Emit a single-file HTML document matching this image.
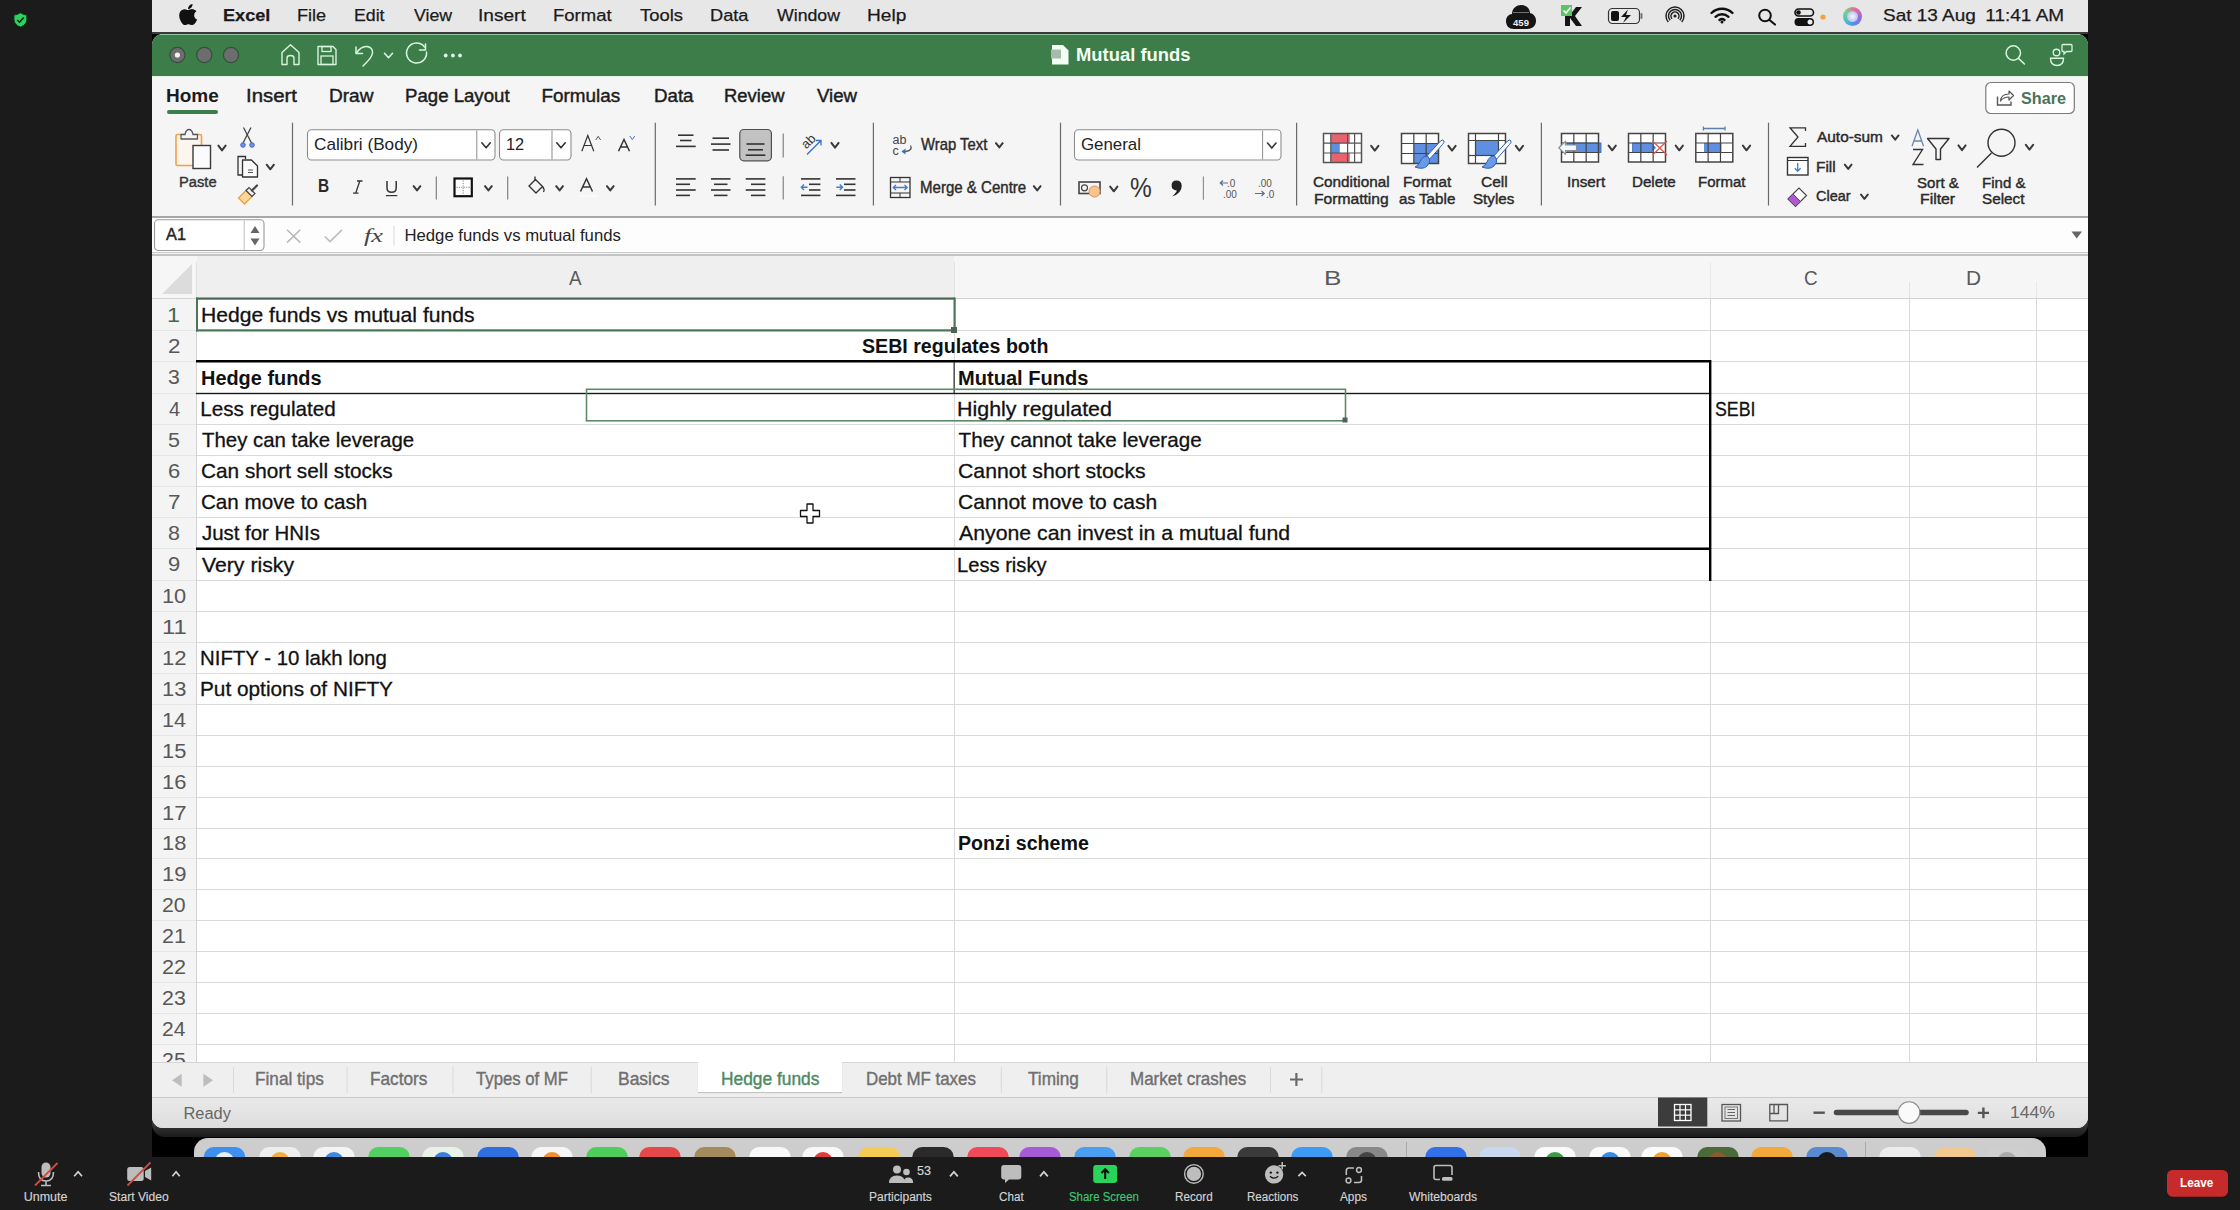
<!DOCTYPE html><html><head><meta charset="utf-8"><style>
*{margin:0;padding:0;box-sizing:border-box}
html,body{width:2240px;height:1210px;overflow:hidden;background:#1b1b1b}
body{position:relative;font-family:"Liberation Sans",sans-serif}
.r{position:absolute}
.t{position:absolute;white-space:nowrap;transform-origin:0 0}
#ov{position:absolute;left:0;top:0}
</style></head><body><div class="r" style="left:0px;top:0px;width:2240px;height:1210px;background:#1b1b1b;"></div>
<div class="r" style="left:152px;top:0px;width:1936px;height:1157px;background:#000;"></div>
<div class="r" style="left:152px;top:0px;width:1936px;height:32px;background:#e7e7e7;"></div>
<div class="r" style="left:152px;top:32px;width:1936px;height:2px;background:#3a3a3a;"></div>
<div class="r" style="left:152px;top:1110px;width:1936px;height:27px;background:linear-gradient(#444,#333 60%,#1a1a1a);border-radius:0 0 13px 13px;"></div>
<div class="r" style="left:152px;top:34px;width:1936px;height:1094px;background:#f5f5f5;border-radius:11px;"></div>
<div class="r" style="left:152px;top:34px;width:1936px;height:42px;background:#3c7d4a;border-radius:11px 11px 0 0;"></div>
<div class="r" style="left:160px;top:34px;width:1920px;height:1px;background:#8fc39b;"></div>
<div class="r" style="left:152px;top:76px;width:1936px;height:1px;background:#e2f2e4;"></div>
<div class="r" style="left:167px;top:110px;width:51px;height:4px;background:#3c7d4a;border-radius:2px;"></div>
<div class="r" style="left:1842.7px;top:6.9px;width:19.2px;height:19.2px;background:conic-gradient(from 20deg,#e86a9a,#9a6ad8,#5a8ae8,#4ac0c8,#7ad08a,#e86a9a);border-radius:50%;"></div>
<div class="r" style="left:1846.5px;top:10.7px;width:11.6px;height:11.6px;background:radial-gradient(#f4f6ff,#b8c4f0 70%,#8a9ad8);border-radius:50%;"></div>
<div class="r" style="left:152px;top:216px;width:1936px;height:2px;background:#a8a8a8;"></div>
<div class="r" style="left:152px;top:218px;width:1936px;height:35px;background:#fdfdfd;"></div>
<div class="r" style="left:152px;top:252px;width:1936px;height:1px;background:#c9c9c9;"></div>
<div class="r" style="left:152px;top:253px;width:1936px;height:1px;background:#f5f5f5;"></div>
<div class="r" style="left:152px;top:254px;width:1936px;height:2px;background:#c4c4c4;"></div>
<div class="r" style="left:152px;top:256px;width:1936px;height:806px;background:#ffffff;"></div>
<div class="r" style="left:152px;top:256px;width:1936px;height:43px;background:#f6f6f6;"></div>
<div class="r" style="left:197px;top:256px;width:757px;height:43px;background:#efefef;"></div>
<div class="r" style="left:152px;top:299px;width:45px;height:763px;background:#f4f4f4;"></div>
<div class="r" style="left:152px;top:1062px;width:1936px;height:35px;background:#efefef;"></div>
<div class="r" style="left:152px;top:1062px;width:1936px;height:1px;background:#d6d6d6;"></div>
<div class="r" style="left:152px;top:1097px;width:1936px;height:31px;background:linear-gradient(#e9e9e9,#dedede);border-radius:0 0 11px 11px;"></div>
<div class="r" style="left:152px;top:1096.5px;width:1936px;height:1px;background:#c9c9c9;"></div>
<div class="r" style="left:697.6px;top:1062px;width:144.6px;height:30px;background:#ffffff;box-shadow:0 1px 1px rgba(0,0,0,0.18);"></div>
<div class="r" style="left:194px;top:1138px;width:1852px;height:30px;background:#cdcdcd;border-radius:14px 14px 0 0;"></div>
<div class="r" style="left:0px;top:1157px;width:2240px;height:53px;background:#1b1b1b;"></div>
<svg id="ov" width="2240" height="1210" viewBox="0 0 2240 1210"><path transform="translate(170.9,-0.4) scale(0.0295 0.0282)" fill="#111" d="M788 553c-1-94 77-139 80-141-44-64-112-73-136-74-58-6-113 34-142 34-30 0-75-33-123-32-63 1-122 37-154 93-66 115-17 284 47 377 31 45 68 96 117 94 47-2 65-30 122-30s73 30 123 29c51-1 83-46 114-91 36-52 51-103 52-106-1 0-99-38-100-153zM694 277c26-32 44-76 39-120-38 2-84 26-111 57-24 28-45 73-40 116 43 3 86-21 112-53z"/>
<path d="M1512 14 C1512 8 1517 5 1521 5 C1526 5 1530 8 1530 13 C1534 14 1536 17 1536 21 C1536 26 1532 29 1527 29 L1514 29 C1509 29 1506 26 1506 21 C1506 17 1509 14 1512 14 Z" fill="#151515"/>
<text x="1521" y="26" font-family="Liberation Sans" font-size="9.5" font-weight="700" fill="#eee" text-anchor="middle">459</text>
<line x1="1513" y1="12.5" x2="1529" y2="12.5" stroke="#888" stroke-width="0.8"/>
<path d="M1565 7 h5 v8 l6-8 h6 l-7 9 l7 10 h-6 l-6-8 v8 h-5 z" fill="#151515"/>
<rect x="1561" y="5" width="11" height="11" fill="#5bc466"/>
<polyline points="1563.5,10.5 1566,13 1570.5,7.5" fill="none" stroke="#fff" stroke-width="1.6"/>
<rect x="1608.5" y="8.5" width="31" height="15" rx="4" fill="none" stroke="#333" stroke-width="1.2"/>
<rect x="1640.5" y="13" width="2" height="6" rx="1" fill="#777"/>
<rect x="1611" y="11" width="8" height="10" rx="2" fill="#111"/>
<path d="M1628 9.5 L1621 17 L1626 17 L1623 23 L1631 15 L1626 15 Z" fill="#111"/>
<path d="M1668.25 21.94 A9 9 0 1 1 1681.75 21.94" fill="none" stroke="#222" stroke-width="1.5"/>
<path d="M1670.125 20.29 A6.5 6.5 0 1 1 1679.875 20.29" fill="none" stroke="#222" stroke-width="1.5"/>
<path d="M1672.0 18.64 A4 4 0 1 1 1678.0 18.64" fill="none" stroke="#222" stroke-width="1.5"/>
<circle cx="1675" cy="16" r="1.6" fill="#222"/>
<path d="M1711.5 13 A15 15 0 0 1 1732.5 13" fill="none" stroke="#111" stroke-width="2.4" stroke-linecap="round"/>
<path d="M1715.5 16.8 A9.5 9.5 0 0 1 1728.5 16.8" fill="none" stroke="#111" stroke-width="2.4" stroke-linecap="round"/>
<path d="M1719.5 20 A4 4 0 0 1 1724.5 20" fill="none" stroke="#111" stroke-width="2.4" stroke-linecap="round"/>
<circle cx="1722" cy="22" r="1.5" fill="#111"/>
<circle cx="1765" cy="15.5" r="5.8" fill="none" stroke="#111" stroke-width="2"/>
<line x1="1769.5" y1="20" x2="1775" y2="24.5" stroke="#111" stroke-width="2.2" stroke-linecap="round"/>
<rect x="1795" y="9" width="18.5" height="7" rx="3.5" fill="none" stroke="#111" stroke-width="1.6"/>
<circle cx="1798.5" cy="12.5" r="2.3" fill="#111"/>
<rect x="1794.5" y="18" width="19.5" height="8" rx="4" fill="#111"/>
<circle cx="1810" cy="22" r="2.5" fill="#eee"/>
<circle cx="1823" cy="17" r="2.6" fill="#f2a23a"/>
<defs><radialGradient id="siri" cx="40%" cy="40%" r="60%"><stop offset="0" stop-color="#b9c8ff"/><stop offset="0.45" stop-color="#5a7fd6"/><stop offset="0.75" stop-color="#9b5fb8"/><stop offset="1" stop-color="#4aa0a8"/></radialGradient></defs>
<circle cx="177.4" cy="55" r="7.6" fill="#6d6d6d" stroke="#33503a" stroke-width="1.2"/>
<circle cx="204.3" cy="55" r="7.6" fill="#6d6d6d" stroke="#33503a" stroke-width="1.2"/>
<circle cx="231" cy="55" r="7.6" fill="#6d6d6d" stroke="#33503a" stroke-width="1.2"/>
<circle cx="177.4" cy="55" r="2.6" fill="#f2f2f2"/>
<path d="M282 64.5 V52.5 L290.5 44.8 L299 52.5 V64.5 H294 V58 Q294 55.5 290.5 55.5 Q287 55.5 287 58 V64.5 Z" fill="none" stroke="#d9f5de" stroke-width="1.4" stroke-linejoin="round"/>
<path d="M318 46.5 H333 L336 49.5 V64.5 H318 Z" fill="none" stroke="#d9f5de" stroke-width="1.4" stroke-linejoin="round"/>
<rect x="322" y="46.5" width="9" height="5" fill="none" stroke="#d9f5de" stroke-width="1.3"/>
<rect x="321" y="56" width="12" height="8.5" fill="none" stroke="#d9f5de" stroke-width="1.3"/>
<path d="M356 47 V53.5 H362.5" fill="none" stroke="#d9f5de" stroke-width="1.5" stroke-linecap="round" stroke-linejoin="round"/>
<path d="M356.5 53 Q361 46 367 46.5 Q373 47.5 372.5 53 Q372 57 366 63 L363 66" fill="none" stroke="#d9f5de" stroke-width="1.5" stroke-linecap="round"/>
<polyline points="384.5,53.25 388.5,57.75 392.5,53.25" fill="none" stroke="#d9f5de" stroke-width="1.6" stroke-linecap="round" stroke-linejoin="round"/>
<path d="M424.5 47 A10 10 0 1 0 426.5 52" fill="none" stroke="#d9f5de" stroke-width="1.5" stroke-linecap="round"/>
<polyline points="425.5,44 425.5,50 419.5,50" fill="none" stroke="#d9f5de" stroke-width="1.5" stroke-linecap="round" stroke-linejoin="round"/>
<circle cx="445.7" cy="55.5" r="1.9" fill="#d9f5de"/>
<circle cx="452.9" cy="55.5" r="1.9" fill="#d9f5de"/>
<circle cx="460" cy="55.5" r="1.9" fill="#d9f5de"/>
<path d="M1052 45 H1063 L1068.5 50.5 V64.5 H1052 Z" fill="#f2fff2"/>
<rect x="1051" y="49.5" width="10" height="9" fill="#a9b9ab"/>
<circle cx="2013.3" cy="53" r="7.2" fill="none" stroke="#d9f5de" stroke-width="1.5"/>
<line x1="2018.5" y1="58.3" x2="2024.4" y2="64" stroke="#d9f5de" stroke-width="1.6" stroke-linecap="round"/>
<circle cx="2056.5" cy="52.5" r="3.3" fill="none" stroke="#d9f5de" stroke-width="1.4"/>
<path d="M2050.5 58.3 H2063.5 Q2063.5 65.5 2057 65.5 Q2050.5 65.5 2050.5 58.3 Z" fill="none" stroke="#d9f5de" stroke-width="1.4"/>
<path d="M2063 44.5 H2071 Q2072 44.5 2072 45.5 V50.5 Q2072 51.5 2071 51.5 H2066.5 L2064 54 V51.5 H2063 Q2062 51.5 2062 50.5 V45.5 Q2062 44.5 2063 44.5 Z" fill="none" stroke="#d9f5de" stroke-width="1.3"/>
<rect x="1985.8" y="82.5" width="88.5" height="31" rx="5" fill="#fff" stroke="#7a7a7a" stroke-width="1.2"/>
<path d="M1997.5 96.5 V105 H2011 V101.5" fill="none" stroke="#555" stroke-width="1.4"/>
<path d="M2000.5 101 Q2001 94 2009 94 V91 L2013.5 95.5 L2009 100 V97 Q2003.5 97 2000.5 101 Z" fill="none" stroke="#555" stroke-width="1.2" stroke-linejoin="round"/>
<line x1="292.5" y1="122.7" x2="292.5" y2="205.5" stroke="#6a6a6a" stroke-width="1.2"/>
<line x1="655.3" y1="122.7" x2="655.3" y2="205.5" stroke="#6a6a6a" stroke-width="1.2"/>
<line x1="873.4" y1="122.7" x2="873.4" y2="205.5" stroke="#6a6a6a" stroke-width="1.2"/>
<line x1="1060.5" y1="122.7" x2="1060.5" y2="205.5" stroke="#6a6a6a" stroke-width="1.2"/>
<line x1="1296.6" y1="122.7" x2="1296.6" y2="205.5" stroke="#6a6a6a" stroke-width="1.2"/>
<line x1="1541.4" y1="122.7" x2="1541.4" y2="205.5" stroke="#6a6a6a" stroke-width="1.2"/>
<line x1="1768.5" y1="122.7" x2="1768.5" y2="205.5" stroke="#6a6a6a" stroke-width="1.2"/>
<line x1="436.3" y1="176.5" x2="436.3" y2="199.5" stroke="#777" stroke-width="1.1"/>
<line x1="507.7" y1="176.5" x2="507.7" y2="199.5" stroke="#777" stroke-width="1.1"/>
<line x1="783.2" y1="133.4" x2="783.2" y2="157.5" stroke="#777" stroke-width="1.1"/>
<line x1="783.2" y1="176.3" x2="783.2" y2="199.5" stroke="#777" stroke-width="1.1"/>
<line x1="1203.4" y1="176.4" x2="1203.4" y2="199.8" stroke="#888" stroke-width="1.1"/>
<rect x="176" y="134.5" width="25.5" height="31" rx="1.5" fill="#fdf6ee" stroke="#f0a048" stroke-width="1.6"/>
<path d="M181 139 V134.5 H185 Q186 129.5 189 129.5 Q192 129.5 193 134.5 H197.5 V139 Z" fill="#f5f5f5" stroke="#5a5a5a" stroke-width="1.3" stroke-linejoin="round"/>
<rect x="193" y="145.5" width="17.5" height="23" fill="#fbfbfd" stroke="#3a3a3a" stroke-width="1.4"/>
<polyline points="218.4,145.625 222,150.375 225.6,145.625" fill="none" stroke="#3a3a3a" stroke-width="2.0" stroke-linecap="round" stroke-linejoin="round"/>
<line x1="243.5" y1="127.5" x2="251.5" y2="143" stroke="#444" stroke-width="1.3"/>
<line x1="251" y1="127.5" x2="243" y2="143" stroke="#444" stroke-width="1.3"/>
<circle cx="243" cy="145" r="2.3" fill="#6f8fe0" stroke="#4a6ac8" stroke-width="1"/>
<circle cx="252" cy="145" r="2.3" fill="#6f8fe0" stroke="#4a6ac8" stroke-width="1"/>
<path d="M245.5 159 L245.5 156.5 H238 V175 H242" fill="none" stroke="#333" stroke-width="1.3"/>
<path d="M242.5 160 H251.5 L257.5 166 V177 H242.5 Z" fill="#fbfbfb" stroke="#333" stroke-width="1.3" stroke-linejoin="round"/>
<line x1="248" y1="170" x2="253" y2="170" stroke="#555" stroke-width="1"/><line x1="248" y1="172.5" x2="253" y2="172.5" stroke="#555" stroke-width="1"/>
<polyline points="266.7,164.72 270.3,169.28 273.90000000000003,164.72" fill="none" stroke="#3a3a3a" stroke-width="2.0" stroke-linecap="round" stroke-linejoin="round"/>
<path d="M238.5 198 L246 190.5 L252 196.5 L244.5 204 Z" fill="#f7d9a0" stroke="#f0a048" stroke-width="1.3"/>
<path d="M246 190.5 L249 187.5 L255 193.5 L252 196.5 Z" fill="#eee" stroke="#444" stroke-width="1.2"/>
<line x1="252" y1="190.5" x2="257" y2="185.5" stroke="#444" stroke-width="2.2" stroke-linecap="round"/>
<rect x="307.5" y="129.8" width="187.5" height="30.2" rx="4" fill="#fff" stroke="#8d8d8d" stroke-width="1.1"/>
<line x1="476.8" y1="130.5" x2="476.8" y2="159.5" stroke="#8d8d8d" stroke-width="1"/>
<polyline points="481.85,142.8 486.1,147.8 490.35,142.8" fill="none" stroke="#333" stroke-width="1.6" stroke-linecap="round" stroke-linejoin="round"/>
<rect x="499.5" y="129.8" width="71.5" height="30.2" rx="4" fill="#fff" stroke="#8d8d8d" stroke-width="1.1"/>
<line x1="552" y1="130.5" x2="552" y2="159.5" stroke="#8d8d8d" stroke-width="1"/>
<polyline points="556.75,142.8 561,147.8 565.25,142.8" fill="none" stroke="#333" stroke-width="1.6" stroke-linecap="round" stroke-linejoin="round"/>
<path d="M581.8 151.3 L587.8 135.5 L593.8 151.3 M584 145.5 H591.5" fill="none" stroke="#333" stroke-width="1.2"/>
<polyline points="595.8,140 598.2,136.3 600.6,140" fill="none" stroke="#555" stroke-width="1"/>
<path d="M618.5 151.3 L624 139.5 L629.5 151.3 M620.5 147 H627.5" fill="none" stroke="#333" stroke-width="1.5"/>
<polyline points="629.8,136 632.3,139.6 634.8,136" fill="none" stroke="#4a78c8" stroke-width="1"/>
<path d="M357 181 H362.5 M353 193.2 H358.5 M359.8 181 L355.7 193.2" fill="none" stroke="#333" stroke-width="1.3"/>
<path d="M387 181 V188 Q387 192.3 391.6 192.3 Q396.2 192.3 396.2 188 V181" fill="none" stroke="#333" stroke-width="1.5"/>
<line x1="386" y1="195.6" x2="397.3" y2="195.6" stroke="#333" stroke-width="1.2"/>
<polyline points="413.625,186.16250000000002 417,190.4375 420.375,186.16250000000002" fill="none" stroke="#3a3a3a" stroke-width="2.0" stroke-linecap="round" stroke-linejoin="round"/>
<rect x="454.5" y="178.5" width="17.3" height="17.7" fill="#fff" stroke="#111" stroke-width="2.2"/>
<line x1="463.2" y1="180.5" x2="463.2" y2="194.5" stroke="#777" stroke-width="0.9" stroke-dasharray="1.2 1.2"/>
<line x1="456.5" y1="187.3" x2="470" y2="187.3" stroke="#777" stroke-width="0.9" stroke-dasharray="1.2 1.2"/>
<polyline points="485.025,186.16250000000002 488.4,190.4375 491.775,186.16250000000002" fill="none" stroke="#3a3a3a" stroke-width="2.0" stroke-linecap="round" stroke-linejoin="round"/>
<path d="M529 186 L535.5 179.5 L542.5 186.5 L536 193 Z" fill="none" stroke="#333" stroke-width="1.4" stroke-linejoin="round"/>
<path d="M535 181 V176.5" fill="none" stroke="#333" stroke-width="1.3"/>
<path d="M542.5 186.5 Q545 189.5 543.5 192" fill="none" stroke="#333" stroke-width="1.3"/>
<polyline points="556.225,186.16250000000002 559.6,190.4375 562.975,186.16250000000002" fill="none" stroke="#3a3a3a" stroke-width="2.0" stroke-linecap="round" stroke-linejoin="round"/>
<path d="M580.5 191.5 L586.5 178.7 L592.5 191.5 M582.8 187 H590.2" fill="none" stroke="#333" stroke-width="1.5"/>
<rect x="579.5" y="194.5" width="18" height="2.5" rx="1" fill="#fafafa"/>
<polyline points="606.925,186.16250000000002 610.3,190.4375 613.675,186.16250000000002" fill="none" stroke="#3a3a3a" stroke-width="2.0" stroke-linecap="round" stroke-linejoin="round"/>
<line x1="678" y1="135.2" x2="693.5" y2="135.2" stroke="#333" stroke-width="1.6"/>
<line x1="680" y1="140.5" x2="691.5" y2="140.5" stroke="#333" stroke-width="1.6"/>
<line x1="676" y1="146.4" x2="695.7" y2="146.4" stroke="#333" stroke-width="1.6"/>
<line x1="712.5" y1="138.2" x2="729" y2="138.2" stroke="#333" stroke-width="1.6"/>
<line x1="711" y1="144.1" x2="730.5" y2="144.1" stroke="#333" stroke-width="1.6"/>
<line x1="712.5" y1="150" x2="729" y2="150" stroke="#333" stroke-width="1.6"/>
<rect x="739.8" y="129.5" width="31.6" height="31.3" rx="4" fill="#c2c2c2" stroke="#505050" stroke-width="1.2"/>
<line x1="746.5" y1="144" x2="764.5" y2="144" stroke="#333" stroke-width="1.6"/>
<line x1="748" y1="149.8" x2="763" y2="149.8" stroke="#333" stroke-width="1.6"/>
<line x1="745.7" y1="155.2" x2="765.4" y2="155.2" stroke="#333" stroke-width="1.6"/>
<line x1="676" y1="178.9" x2="695.7" y2="178.9" stroke="#333" stroke-width="1.6"/>
<line x1="676" y1="184.3" x2="690" y2="184.3" stroke="#333" stroke-width="1.6"/>
<line x1="676" y1="190" x2="695.7" y2="190" stroke="#333" stroke-width="1.6"/>
<line x1="676" y1="195.4" x2="690" y2="195.4" stroke="#333" stroke-width="1.6"/>
<line x1="711" y1="178.9" x2="730.5" y2="178.9" stroke="#333" stroke-width="1.6"/>
<line x1="714" y1="184.3" x2="727.5" y2="184.3" stroke="#333" stroke-width="1.6"/>
<line x1="711" y1="190" x2="730.5" y2="190" stroke="#333" stroke-width="1.6"/>
<line x1="714" y1="195.4" x2="727.5" y2="195.4" stroke="#333" stroke-width="1.6"/>
<line x1="745.7" y1="178.9" x2="765.4" y2="178.9" stroke="#333" stroke-width="1.6"/>
<line x1="751" y1="184.3" x2="765.4" y2="184.3" stroke="#333" stroke-width="1.6"/>
<line x1="745.7" y1="190" x2="765.4" y2="190" stroke="#333" stroke-width="1.6"/>
<line x1="751" y1="195.4" x2="765.4" y2="195.4" stroke="#333" stroke-width="1.6"/>
<line x1="801" y1="178.9" x2="820.4" y2="178.9" stroke="#333" stroke-width="1.6"/>
<line x1="801" y1="195.4" x2="820.4" y2="195.4" stroke="#333" stroke-width="1.6"/>
<line x1="809" y1="184.3" x2="820.4" y2="184.3" stroke="#333" stroke-width="1.6"/>
<line x1="809" y1="190" x2="820.4" y2="190" stroke="#333" stroke-width="1.6"/>
<path d="M807.5 187.2 H801.5 M804 184.5 L801.3 187.2 L804 189.9" fill="none" stroke="#3d7fd0" stroke-width="1.4"/>
<line x1="836" y1="178.9" x2="855.5" y2="178.9" stroke="#333" stroke-width="1.6"/>
<line x1="836" y1="195.4" x2="855.5" y2="195.4" stroke="#333" stroke-width="1.6"/>
<line x1="844" y1="184.3" x2="855.5" y2="184.3" stroke="#333" stroke-width="1.6"/>
<line x1="844" y1="190" x2="855.5" y2="190" stroke="#333" stroke-width="1.6"/>
<path d="M836.3 187.2 H842.3 M839.8 184.5 L842.5 187.2 L839.8 189.9" fill="none" stroke="#3d7fd0" stroke-width="1.4"/>
<text x="808" y="145.8" font-family="Liberation Sans" font-size="13" fill="#3a3a3a" text-anchor="middle" transform="rotate(-45 808 141)">ab</text>
<path d="M807 154.5 L820.5 141 M816 140.5 H821 V145.5" fill="none" stroke="#3573c0" stroke-width="1.3"/>
<polyline points="831.4,142.925 835,147.675 838.6,142.925" fill="none" stroke="#3a3a3a" stroke-width="2.0" stroke-linecap="round" stroke-linejoin="round"/>
<text x="892.5" y="144" font-family="Liberation Sans" font-size="12.5" fill="#444">ab</text>
<text x="892.5" y="155" font-family="Liberation Sans" font-size="12.5" fill="#444">c</text>
<path d="M910.5 145.5 Q913 150 906 151.5 H902.5" fill="none" stroke="#555" stroke-width="1.3"/>
<path d="M901.5 151.5 L905.5 148.5 V154.5 Z" fill="#3573c0"/>
<polyline points="995.925,143.16250000000002 999.3,147.4375 1002.675,143.16250000000002" fill="none" stroke="#3a3a3a" stroke-width="2.0" stroke-linecap="round" stroke-linejoin="round"/>
<rect x="890.5" y="177.5" width="19.5" height="20" fill="none" stroke="#333" stroke-width="1.3"/>
<line x1="890.5" y1="182" x2="910" y2="182" stroke="#333" stroke-width="1"/><line x1="890.5" y1="193" x2="910" y2="193" stroke="#333" stroke-width="1"/>
<line x1="900" y1="177.5" x2="900" y2="182" stroke="#333" stroke-width="1"/><line x1="900" y1="193" x2="900" y2="197.5" stroke="#333" stroke-width="1"/>
<path d="M893.5 187.5 H907 M896 185 L893.3 187.5 L896 190 M904.5 185 L907.2 187.5 L904.5 190" fill="none" stroke="#3d7fd0" stroke-width="1.3"/>
<polyline points="1033.825,186.16250000000002 1037.2,190.4375 1040.575,186.16250000000002" fill="none" stroke="#3a3a3a" stroke-width="2.0" stroke-linecap="round" stroke-linejoin="round"/>
<rect x="1074.5" y="129.8" width="206.5" height="30.2" rx="4" fill="#fff" stroke="#8d8d8d" stroke-width="1.1"/>
<line x1="1262.6" y1="130.5" x2="1262.6" y2="159.5" stroke="#8d8d8d" stroke-width="1"/>
<polyline points="1267.55,143.1 1271.8,148.1 1276.05,143.1" fill="none" stroke="#333" stroke-width="1.6" stroke-linecap="round" stroke-linejoin="round"/>
<rect x="1079" y="182" width="21" height="11.5" fill="none" stroke="#444" stroke-width="1.6"/>
<circle cx="1084.5" cy="187.8" r="3" fill="none" stroke="#444" stroke-width="1.2"/>
<ellipse cx="1094.5" cy="191.5" rx="5.5" ry="5.5" fill="#f7c590" stroke="#e9904a" stroke-width="1"/>
<polyline points="1110.2,186.525 1113.8,191.275 1117.3999999999999,186.525" fill="none" stroke="#3a3a3a" stroke-width="2.0" stroke-linecap="round" stroke-linejoin="round"/>
<path d="M1176.5 180.5 Q1181.7 180.5 1181.7 186 Q1181.7 193.5 1172 196.5 Q1176.5 192.5 1176.8 190.5 Q1171.6 190 1171.6 185.5 Q1171.6 180.5 1176.5 180.5 Z" fill="#222"/>
<text x="1227" y="186.5" font-family="Liberation Sans" font-size="10" fill="#555">.0</text>
<text x="1223" y="197.5" font-family="Liberation Sans" font-size="10" fill="#555">.00</text>
<path d="M1228 183 H1220.5 M1223 180.5 L1220.3 183 L1223 185.5" fill="none" stroke="#5a6f8f" stroke-width="1.2"/>
<text x="1258" y="186.5" font-family="Liberation Sans" font-size="10" fill="#555">.00</text>
<text x="1266" y="197.5" font-family="Liberation Sans" font-size="10" fill="#555">.0</text>
<path d="M1255 193.5 H1264 M1261.5 191 L1264.2 193.5 L1261.5 196" fill="none" stroke="#5a6f8f" stroke-width="1.2"/>
<rect x="1323.5" y="133.5" width="38" height="29" fill="#fff"/>
<rect x="1330.8" y="133.5" width="19" height="9.6" fill="#e8636e"/>
<rect x="1330.8" y="153" width="19" height="9.6" fill="#e8636e"/>
<rect x="1330.8" y="143.1" width="9" height="9.9" fill="#5e8fe0"/>
<rect x="1323.5" y="133.5" width="38" height="29" fill="none" stroke="#555" stroke-width="1.5"/>
<line x1="1330.8" y1="133.5" x2="1330.8" y2="162.5" stroke="#555" stroke-width="1.2"/>
<line x1="1347.6" y1="133.5" x2="1347.6" y2="162.5" stroke="#555" stroke-width="1.2"/>
<line x1="1354.6" y1="133.5" x2="1354.6" y2="162.5" stroke="#555" stroke-width="1.2"/>
<line x1="1323.5" y1="143.1" x2="1361.5" y2="143.1" stroke="#555" stroke-width="1.2"/>
<line x1="1323.5" y1="153" x2="1361.5" y2="153" stroke="#555" stroke-width="1.2"/>
<polyline points="1371.2,145.825 1374.8,150.575 1378.3999999999999,145.825" fill="none" stroke="#3a3a3a" stroke-width="2.0" stroke-linecap="round" stroke-linejoin="round"/>
<rect x="1401.5" y="133.5" width="37" height="30" fill="#fff"/>
<rect x="1414" y="143.5" width="24.5" height="20" fill="#5e8fe0"/>
<rect x="1401.5" y="133.5" width="37.0" height="30.0" fill="none" stroke="#444" stroke-width="1.5"/>
<line x1="1413.83" y1="133.5" x2="1413.83" y2="163.5" stroke="#444" stroke-width="1.2000000000000002"/>
<line x1="1426.17" y1="133.5" x2="1426.17" y2="163.5" stroke="#444" stroke-width="1.2000000000000002"/>
<line x1="1401.5" y1="143.50" x2="1438.5" y2="143.50" stroke="#444" stroke-width="1.2000000000000002"/>
<line x1="1401.5" y1="153.50" x2="1438.5" y2="153.50" stroke="#444" stroke-width="1.2000000000000002"/>
<path d="M1425 158 L1440.5 141 Q1443 139 1444 141 Q1444.5 142.5 1442.5 144.5 L1428 161 Z" fill="#fafafa" stroke="#2d5fb0" stroke-width="1"/>
<path d="M1427.5 156 Q1422 156 1420 162 Q1418 166 1415 167 Q1423 170 1427 166 Q1430.5 162.5 1429.5 159 Z" fill="#6a9ae6" stroke="#2d5fb0" stroke-width="1"/>
<polyline points="1448.4,145.825 1452,150.575 1455.6,145.825" fill="none" stroke="#3a3a3a" stroke-width="2.0" stroke-linecap="round" stroke-linejoin="round"/>
<rect x="1468.5" y="133.5" width="37" height="30" fill="#fff"/>
<rect x="1475.5" y="140.5" width="23" height="15" fill="#5e8fe0"/>
<rect x="1468.5" y="133.5" width="37" height="30" fill="none" stroke="#444" stroke-width="1.5"/>
<line x1="1475.5" y1="133.5" x2="1475.5" y2="163.5" stroke="#444" stroke-width="1.2"/><line x1="1498.5" y1="133.5" x2="1498.5" y2="155.5" stroke="#444" stroke-width="1.2"/>
<line x1="1468.5" y1="140.5" x2="1505.5" y2="140.5" stroke="#444" stroke-width="1.2"/><line x1="1468.5" y1="155.5" x2="1498.5" y2="155.5" stroke="#444" stroke-width="1.2"/>
<path d="M1492 158 L1507.5 141 Q1510 139 1511 141 Q1511.5 142.5 1509.5 144.5 L1495 161 Z" fill="#fafafa" stroke="#2d5fb0" stroke-width="1"/>
<path d="M1494.5 156 Q1489 156 1487 162 Q1485 166 1482 167 Q1490 170 1494 166 Q1497.5 162.5 1496.5 159 Z" fill="#6a9ae6" stroke="#2d5fb0" stroke-width="1"/>
<polyline points="1515.8000000000002,145.825 1519.4,150.575 1523.0,145.825" fill="none" stroke="#3a3a3a" stroke-width="2.0" stroke-linecap="round" stroke-linejoin="round"/>
<rect x="1561.5" y="133.5" width="37" height="28.5" fill="#fff"/>
<rect x="1567" y="143" width="34" height="9.5" fill="#5e8fe0" stroke="#2d5fb0" stroke-width="0.8"/>
<rect x="1561.5" y="133.5" width="37.0" height="28.5" fill="none" stroke="#444" stroke-width="1.5"/>
<line x1="1573.83" y1="133.5" x2="1573.83" y2="162" stroke="#444" stroke-width="1.2000000000000002"/>
<line x1="1586.17" y1="133.5" x2="1586.17" y2="162" stroke="#444" stroke-width="1.2000000000000002"/>
<line x1="1561.5" y1="143.00" x2="1598.5" y2="143.00" stroke="#444" stroke-width="1.2000000000000002"/>
<line x1="1561.5" y1="152.50" x2="1598.5" y2="152.50" stroke="#444" stroke-width="1.2000000000000002"/>
<path d="M1558.8 147.8 L1565.5 141.2 V145 H1576.5 V150.6 H1565.5 V154.4 Z" fill="#f4f8ff" stroke="#8a8f98" stroke-width="1.2" stroke-linejoin="round"/>
<polyline points="1608.6000000000001,145.525 1612.2,150.275 1615.8,145.525" fill="none" stroke="#3a3a3a" stroke-width="2.0" stroke-linecap="round" stroke-linejoin="round"/>
<rect x="1628.5" y="133.5" width="37" height="28.5" fill="#fff"/>
<path d="M1632.6 143 H1651 L1655.5 147.8 L1651 152.5 H1632.6 Z" fill="#5e8fe0" stroke="#2d5fb0" stroke-width="0.8"/>
<rect x="1628.5" y="133.5" width="37.0" height="28.5" fill="none" stroke="#444" stroke-width="1.5"/>
<line x1="1640.83" y1="133.5" x2="1640.83" y2="162" stroke="#444" stroke-width="1.2000000000000002"/>
<line x1="1653.17" y1="133.5" x2="1653.17" y2="162" stroke="#444" stroke-width="1.2000000000000002"/>
<line x1="1628.5" y1="143.00" x2="1665.5" y2="143.00" stroke="#444" stroke-width="1.2000000000000002"/>
<line x1="1628.5" y1="152.50" x2="1665.5" y2="152.50" stroke="#444" stroke-width="1.2000000000000002"/>
<path d="M1652.5 141 L1667 155 M1667 141 L1652.5 155" stroke="#e0574d" stroke-width="1.3"/>
<polyline points="1675.7,145.525 1679.3,150.275 1682.8999999999999,145.525" fill="none" stroke="#3a3a3a" stroke-width="2.0" stroke-linecap="round" stroke-linejoin="round"/>
<rect x="1695.8" y="133.5" width="37" height="28.5" fill="#fff"/>
<rect x="1704" y="143" width="17.5" height="9.5" fill="#5e8fe0"/>
<rect x="1695.8" y="133.5" width="37.0" height="28.5" fill="none" stroke="#444" stroke-width="1.5"/>
<line x1="1708.13" y1="133.5" x2="1708.13" y2="162" stroke="#444" stroke-width="1.2000000000000002"/>
<line x1="1720.47" y1="133.5" x2="1720.47" y2="162" stroke="#444" stroke-width="1.2000000000000002"/>
<line x1="1695.8" y1="143.00" x2="1732.8" y2="143.00" stroke="#444" stroke-width="1.2000000000000002"/>
<line x1="1695.8" y1="152.50" x2="1732.8" y2="152.50" stroke="#444" stroke-width="1.2000000000000002"/>
<path d="M1703.4 128.5 H1725 M1703.4 126.5 V130.5 M1725 126.5 V130.5" stroke="#5a7fa8" stroke-width="1.3"/>
<polyline points="1742.9,145.525 1746.5,150.275 1750.1,145.525" fill="none" stroke="#3a3a3a" stroke-width="2.0" stroke-linecap="round" stroke-linejoin="round"/>
<path d="M1805.5 131 V127.8 H1790 L1798 137 L1790 146.3 H1805.5 V143" fill="none" stroke="#333" stroke-width="1.3"/>
<polyline points="1891.825,135.4625 1895.2,139.73749999999998 1898.575,135.4625" fill="none" stroke="#3a3a3a" stroke-width="2.0" stroke-linecap="round" stroke-linejoin="round"/>
<rect x="1787.5" y="157.5" width="20.5" height="17.5" fill="#fff" stroke="#333" stroke-width="1.4"/>
<line x1="1787.5" y1="160.5" x2="1808" y2="160.5" stroke="#333" stroke-width="1"/>
<path d="M1797.7 163 V171 M1794.8 168.3 L1797.7 171.3 L1800.6 168.3" fill="none" stroke="#3d7fd0" stroke-width="1.3"/>
<polyline points="1844.825,164.66250000000002 1848.2,168.9375 1851.575,164.66250000000002" fill="none" stroke="#3a3a3a" stroke-width="2.0" stroke-linecap="round" stroke-linejoin="round"/>
<path d="M1788 199 L1799 188 L1806.5 195.5 L1795.5 206.5 Z" fill="#fff" stroke="#444" stroke-width="1.2"/>
<path d="M1788 199 L1793 194 L1800.5 201.5 L1795.5 206.5 Z" fill="#b05ad0" stroke="#6a3a90" stroke-width="1"/>
<polyline points="1861.025,194.5625 1864.4,198.83749999999998 1867.775,194.5625" fill="none" stroke="#3a3a3a" stroke-width="2.0" stroke-linecap="round" stroke-linejoin="round"/>
<path d="M1912 146.3 L1917.8 130 L1923.6 146.3 M1914 141 H1921.6" fill="none" stroke="#6a86b0" stroke-width="1.3"/>
<path d="M1913 149.5 H1922.5 L1913 164.5 H1923.5" fill="none" stroke="#333" stroke-width="1.4"/>
<path d="M1927.5 138.5 H1949 L1940.5 149 V159.5 H1936 V149 Z" fill="none" stroke="#333" stroke-width="1.4" stroke-linejoin="round"/>
<polyline points="1958.4,145.425 1962,150.175 1965.6,145.425" fill="none" stroke="#3a3a3a" stroke-width="2.0" stroke-linecap="round" stroke-linejoin="round"/>
<circle cx="2001.5" cy="142.7" r="13.5" fill="none" stroke="#333" stroke-width="1.4"/>
<line x1="1991.5" y1="153" x2="1977" y2="167.5" stroke="#333" stroke-width="1.4"/>
<polyline points="2025.9,144.825 2029.5,149.575 2033.1,144.825" fill="none" stroke="#3a3a3a" stroke-width="2.0" stroke-linecap="round" stroke-linejoin="round"/>
<rect x="154.5" y="219.8" width="109.5" height="30.7" rx="4" fill="#fff" stroke="#9a9a9a" stroke-width="1.1"/>
<line x1="244.2" y1="220.5" x2="244.2" y2="250" stroke="#c0c0c0" stroke-width="1"/>
<path d="M250.5 233 L255 226 L259.5 233 Z" fill="#666"/><path d="M250.5 238.5 L255 245.5 L259.5 238.5 Z" fill="#666"/>
<path d="M287 229.8 L300.3 242.6 M300.3 229.8 L287 242.6" stroke="#b8b8b8" stroke-width="1.5"/>
<polyline points="324.8,236.5 330,241.6 342,229.8" fill="none" stroke="#bdbdbd" stroke-width="1.7"/>
<line x1="394" y1="226" x2="394" y2="245.5" stroke="#d8d8d8" stroke-width="1"/>
<path d="M2071.5 231.5 H2082 L2076.75 238.5 Z" fill="#666"/>
<rect x="197" y="330" width="1891" height="1" fill="#dadada" />
<rect x="152" y="330" width="45" height="1" fill="#e6e6e6" />
<rect x="197" y="361" width="1891" height="1" fill="#dadada" />
<rect x="152" y="361" width="45" height="1" fill="#e6e6e6" />
<rect x="197" y="393" width="1891" height="1" fill="#dadada" />
<rect x="152" y="393" width="45" height="1" fill="#e6e6e6" />
<rect x="197" y="424" width="1891" height="1" fill="#dadada" />
<rect x="152" y="424" width="45" height="1" fill="#e6e6e6" />
<rect x="197" y="455" width="1891" height="1" fill="#dadada" />
<rect x="152" y="455" width="45" height="1" fill="#e6e6e6" />
<rect x="197" y="486" width="1891" height="1" fill="#dadada" />
<rect x="152" y="486" width="45" height="1" fill="#e6e6e6" />
<rect x="197" y="517" width="1891" height="1" fill="#dadada" />
<rect x="152" y="517" width="45" height="1" fill="#e6e6e6" />
<rect x="197" y="548" width="1891" height="1" fill="#dadada" />
<rect x="152" y="548" width="45" height="1" fill="#e6e6e6" />
<rect x="197" y="580" width="1891" height="1" fill="#dadada" />
<rect x="152" y="580" width="45" height="1" fill="#e6e6e6" />
<rect x="197" y="611" width="1891" height="1" fill="#dadada" />
<rect x="152" y="611" width="45" height="1" fill="#e6e6e6" />
<rect x="197" y="642" width="1891" height="1" fill="#dadada" />
<rect x="152" y="642" width="45" height="1" fill="#e6e6e6" />
<rect x="197" y="673" width="1891" height="1" fill="#dadada" />
<rect x="152" y="673" width="45" height="1" fill="#e6e6e6" />
<rect x="197" y="704" width="1891" height="1" fill="#dadada" />
<rect x="152" y="704" width="45" height="1" fill="#e6e6e6" />
<rect x="197" y="735" width="1891" height="1" fill="#dadada" />
<rect x="152" y="735" width="45" height="1" fill="#e6e6e6" />
<rect x="197" y="766" width="1891" height="1" fill="#dadada" />
<rect x="152" y="766" width="45" height="1" fill="#e6e6e6" />
<rect x="197" y="797" width="1891" height="1" fill="#dadada" />
<rect x="152" y="797" width="45" height="1" fill="#e6e6e6" />
<rect x="197" y="828" width="1891" height="1" fill="#dadada" />
<rect x="152" y="828" width="45" height="1" fill="#e6e6e6" />
<rect x="197" y="858" width="1891" height="1" fill="#dadada" />
<rect x="152" y="858" width="45" height="1" fill="#e6e6e6" />
<rect x="197" y="889" width="1891" height="1" fill="#dadada" />
<rect x="152" y="889" width="45" height="1" fill="#e6e6e6" />
<rect x="197" y="920" width="1891" height="1" fill="#dadada" />
<rect x="152" y="920" width="45" height="1" fill="#e6e6e6" />
<rect x="197" y="951" width="1891" height="1" fill="#dadada" />
<rect x="152" y="951" width="45" height="1" fill="#e6e6e6" />
<rect x="197" y="982" width="1891" height="1" fill="#dadada" />
<rect x="152" y="982" width="45" height="1" fill="#e6e6e6" />
<rect x="197" y="1013" width="1891" height="1" fill="#dadada" />
<rect x="152" y="1013" width="45" height="1" fill="#e6e6e6" />
<rect x="197" y="1044" width="1891" height="1" fill="#dadada" />
<rect x="152" y="1044" width="45" height="1" fill="#e6e6e6" />
<rect x="954" y="299" width="1" height="763" fill="#dadada" />
<rect x="1909" y="299" width="1" height="763" fill="#dadada" />
<rect x="2036" y="299" width="1" height="763" fill="#dadada" />
<rect x="1710" y="299" width="1" height="763" fill="#dadada" />
<rect x="954" y="262" width="1" height="37" fill="#e2e2e2" />
<rect x="1710" y="262" width="1" height="37" fill="#e8e8e8" />
<rect x="1909" y="282" width="1" height="17" fill="#e2e2e2" />
<rect x="2036" y="282" width="1" height="17" fill="#e8e8e8" />
<rect x="152" y="298" width="1936" height="1" fill="#d2d2d2" />
<rect x="196" y="299" width="1" height="763" fill="#d2d2d2" />
<rect x="196" y="262" width="1" height="37" fill="#e0e0e0" />
<path d="M192 264 L192 294 L162 294 Z" fill="#dcdcdc"/>
<rect x="196" y="360" width="1515" height="2.5" fill="#000" />
<rect x="196" y="392.8" width="1515" height="1.4" fill="#1a1a1a" />
<rect x="196" y="547.5" width="1515" height="2.5" fill="#000" />
<rect x="1709" y="360" width="2.4" height="221" fill="#000" />
<rect x="953.5" y="362" width="1.3" height="31" fill="#333" />
<rect x="196" y="297.5" width="759" height="2.2" fill="#4d6356" />
<rect x="953.5" y="297.5" width="2.2" height="33" fill="#4a7658" />
<rect x="196" y="329.3" width="757" height="2.2" fill="#4a7658" />
<rect x="196" y="297.5" width="2" height="34" fill="#4a7658" />
<rect x="951" y="327" width="6" height="6" fill="#4d6356" />
<rect x="586.5" y="389.3" width="759" height="31.5" fill="none" stroke="#5c8a6a" stroke-width="1.6"/>
<rect x="1342.5" y="417.5" width="5" height="5" fill="#4d6356" />
<path d="M807 504 h6 v6.5 h6.5 v6 h-6.5 v6.5 h-6 v-6.5 h-6.5 v-6 h6.5 z" fill="#fff" stroke="#111" stroke-width="1.3" stroke-linejoin="round"/>
<rect x="233" y="1067" width="1" height="26" fill="#d9d9d9" />
<rect x="346.6" y="1067" width="1" height="26" fill="#d9d9d9" />
<rect x="452.5" y="1067" width="1" height="26" fill="#d9d9d9" />
<rect x="590.7" y="1067" width="1" height="26" fill="#d9d9d9" />
<rect x="1000.8" y="1067" width="1" height="26" fill="#d9d9d9" />
<rect x="1106.3" y="1067" width="1" height="26" fill="#d9d9d9" />
<rect x="1270" y="1067" width="1" height="26" fill="#d9d9d9" />
<rect x="1321.3" y="1067" width="1" height="26" fill="#d9d9d9" />
<path d="M181.7 1073.8 L172 1080.3 L181.7 1086.8 Z" fill="#bdbdbd"/>
<path d="M203.4 1073.8 L213 1080.3 L203.4 1086.8 Z" fill="#bdbdbd"/>
<path d="M1296.4 1073 V1086 M1290 1079.5 H1303" stroke="#6a6a6a" stroke-width="2.2"/>
<rect x="1658" y="1097.5" width="49.3" height="29" fill="#3c3c3c" />
<rect x="1674.5" y="1104.5" width="16.5" height="16" fill="none" stroke="#fff" stroke-width="1.3"/>
<line x1="1680.00" y1="1104.5" x2="1680.00" y2="1120.5" stroke="#fff" stroke-width="1.2"/>
<line x1="1674.5" y1="1109.83" x2="1691" y2="1109.83" stroke="#fff" stroke-width="1.2"/>
<line x1="1685.50" y1="1104.5" x2="1685.50" y2="1120.5" stroke="#fff" stroke-width="1.2"/>
<line x1="1674.5" y1="1115.17" x2="1691" y2="1115.17" stroke="#fff" stroke-width="1.2"/>
<rect x="1722" y="1104.5" width="18.5" height="16.5" fill="none" stroke="#555" stroke-width="1.3"/>
<rect x="1725" y="1107" width="12.5" height="11.5" fill="none" stroke="#777" stroke-width="1"/>
<line x1="1727.5" y1="1109.5" x2="1735" y2="1109.5" stroke="#666" stroke-width="1"/>
<line x1="1727.5" y1="1112.5" x2="1735" y2="1112.5" stroke="#666" stroke-width="1"/>
<line x1="1727.5" y1="1115.5" x2="1735" y2="1115.5" stroke="#666" stroke-width="1"/>
<path d="M1769.8 1104.5 H1787.5 V1120.8 H1769.8 Z M1769.8 1113.5 H1778.5 V1104.5 M1774 1104.5 V1113.5" fill="none" stroke="#555" stroke-width="1.3"/>
<rect x="1813.5" y="1111.5" width="11.3" height="2.4" fill="#555" />
<line x1="1836.5" y1="1112.6" x2="1966" y2="1112.6" stroke="#484848" stroke-width="5.5" stroke-linecap="round"/>
<circle cx="1909" cy="1112.6" r="10.8" fill="#fafafa" stroke="#8a8a8a" stroke-width="1.1"/>
<path d="M1983.4 1107.5 V1118.3 M1977.8 1112.9 H1989" stroke="#555" stroke-width="2.4"/>
<rect x="203.75" y="1147" width="41.5" height="30" rx="10" fill="#3d8ff0"/>
<circle cx="224.5" cy="1162" r="10" fill="#e8eef5"/>
<rect x="259.25" y="1147" width="41.5" height="30" rx="10" fill="#eeeeee"/>
<circle cx="280" cy="1162" r="10" fill="#f0b040"/>
<rect x="313.25" y="1147" width="41.5" height="30" rx="10" fill="#f4f4f4"/>
<circle cx="334" cy="1162" r="10" fill="#3d8ae0"/>
<rect x="368.25" y="1147" width="41.5" height="30" rx="10" fill="#50d060"/>
<rect x="422.25" y="1147" width="41.5" height="30" rx="10" fill="#e9f2e9"/>
<circle cx="443" cy="1162" r="10" fill="#3c7dd8"/>
<rect x="477.25" y="1147" width="41.5" height="30" rx="10" fill="#2f6fe0"/>
<rect x="531.25" y="1147" width="41.5" height="30" rx="10" fill="#f6f6f6"/>
<circle cx="552" cy="1162" r="10" fill="#f09030"/>
<rect x="586.25" y="1147" width="41.5" height="30" rx="10" fill="#4ccd5c"/>
<rect x="639.25" y="1147" width="41.5" height="30" rx="10" fill="#e54848"/>
<rect x="694.25" y="1147" width="41.5" height="30" rx="10" fill="#a58a5c"/>
<rect x="749.25" y="1147" width="41.5" height="30" rx="10" fill="#f8f8f8"/>
<rect x="802.25" y="1147" width="41.5" height="30" rx="10" fill="#f8f8f8"/>
<circle cx="823" cy="1162" r="10" fill="#e03c3c"/>
<rect x="858.25" y="1147" width="41.5" height="30" rx="10" fill="#f4cb55"/>
<rect x="912.25" y="1147" width="41.5" height="30" rx="10" fill="#2a2a2a"/>
<rect x="967.25" y="1147" width="41.5" height="30" rx="10" fill="#ee4a5a"/>
<rect x="1019.25" y="1147" width="41.5" height="30" rx="10" fill="#a55ad8"/>
<rect x="1074.25" y="1147" width="41.5" height="30" rx="10" fill="#4a9ff0"/>
<rect x="1129.25" y="1147" width="41.5" height="30" rx="10" fill="#5ad060"/>
<rect x="1183.25" y="1147" width="41.5" height="30" rx="10" fill="#f2a83a"/>
<rect x="1237.25" y="1147" width="41.5" height="30" rx="10" fill="#3a3a3a"/>
<rect x="1291.25" y="1147" width="41.5" height="30" rx="10" fill="#3d9bf5"/>
<rect x="1346.25" y="1147" width="41.5" height="30" rx="10" fill="#888"/>
<circle cx="1367" cy="1162" r="10" fill="#444"/>
<rect x="1425.25" y="1147" width="41.5" height="30" rx="10" fill="#3070e8"/>
<rect x="1479.25" y="1147" width="41.5" height="30" rx="10" fill="#c8d8f0"/>
<rect x="1534.25" y="1147" width="41.5" height="30" rx="10" fill="#fafafa"/>
<circle cx="1555" cy="1162" r="10" fill="#3a9a4a"/>
<rect x="1589.25" y="1147" width="41.5" height="30" rx="10" fill="#fafafa"/>
<circle cx="1610" cy="1162" r="10" fill="#3a8ae0"/>
<rect x="1641.25" y="1147" width="41.5" height="30" rx="10" fill="#fafafa"/>
<circle cx="1662" cy="1162" r="10" fill="#f0a030"/>
<rect x="1697.25" y="1147" width="41.5" height="30" rx="10" fill="#4a6a3a"/>
<circle cx="1718" cy="1162" r="10" fill="#8a5a30"/>
<rect x="1751.25" y="1147" width="41.5" height="30" rx="10" fill="#f2a83a"/>
<rect x="1806.25" y="1147" width="41.5" height="30" rx="10" fill="#5a8ad0"/>
<circle cx="1827" cy="1162" r="10" fill="#1a1a1a"/>
<rect x="1879.25" y="1147" width="41.5" height="30" rx="10" fill="#ececec"/>
<rect x="1934.25" y="1147" width="41.5" height="30" rx="10" fill="#f0c890"/>
<rect x="1986.25" y="1147" width="41.5" height="30" rx="10" fill="#cfcfcf"/>
<circle cx="2007" cy="1162" r="10" fill="#aaa"/>
<rect x="1406" y="1142" width="1" height="15" fill="#aaa" />
<rect x="1865" y="1142" width="1" height="15" fill="#aaa" />
<rect x="0" y="1157" width="2240" height="53" fill="#1b1b1b" />
<path d="M20.4 12.8 Q24 15 26.8 15 V19.5 Q26.8 24.8 20.4 27 Q14 24.8 14 19.5 V15 Q16.8 15 20.4 12.8 Z" fill="#2bd35f" stroke="#0d3a18" stroke-width="1"/>
<polyline points="17.3,20 19.5,22.2 23.8,17.6" fill="none" stroke="#0a1a0a" stroke-width="1.5"/>
<rect x="41.5" y="1162.5" width="9" height="15" rx="4.5" fill="#bdbdbd"/>
<path d="M38.5 1172 Q38.5 1181 46 1181 Q53.5 1181 53.5 1172" fill="none" stroke="#bdbdbd" stroke-width="1.6"/>
<path d="M46 1181 V1185 M41 1185.5 H51" stroke="#bdbdbd" stroke-width="1.6"/>
<line x1="35" y1="1185.5" x2="57.5" y2="1163" stroke="#d24b3e" stroke-width="1.8"/>
<polyline points="74.2,1176.2 78.1,1171.8 82,1176.2" fill="none" stroke="#d4d4d4" stroke-width="1.7"/>
<rect x="127.2" y="1167" width="16.5" height="14" rx="2.5" fill="#bdbdbd"/>
<path d="M145 1171 L151.2 1167.5 V1180.5 L145 1177 Z" fill="#bdbdbd"/>
<line x1="127.5" y1="1185.5" x2="150.5" y2="1162.5" stroke="#d24b3e" stroke-width="1.8"/>
<polyline points="172.4,1176.2 176.05,1171.8 179.7,1176.2" fill="none" stroke="#d4d4d4" stroke-width="1.7"/>
<circle cx="897" cy="1169.5" r="4" fill="#bdbdbd"/><path d="M889 1183 Q889 1175.5 897 1175.5 Q905 1175.5 905 1183 Z" fill="#bdbdbd"/>
<circle cx="906.5" cy="1172" r="3.3" fill="#bdbdbd"/><path d="M903.5 1183 Q903.5 1177.5 908.3 1177.5 Q913.1 1177.5 913.1 1183 Z" fill="#bdbdbd"/>
<polyline points="950,1176.4 953.9,1171.9 957.8,1176.4" fill="none" stroke="#d4d4d4" stroke-width="1.7"/>
<path d="M1004 1165 H1018.5 Q1021.3 1165 1021.3 1168 V1176.5 Q1021.3 1179.5 1018.5 1179.5 H1009 L1005 1183 V1179.5 H1004 Q1001.2 1179.5 1001.2 1176.5 V1168 Q1001.2 1165 1004 1165 Z" fill="#bdbdbd"/>
<polyline points="1040,1176.4 1043.9,1171.9 1047.8,1176.4" fill="none" stroke="#d4d4d4" stroke-width="1.7"/>
<rect x="1093.2" y="1165" width="23.9" height="18" rx="3" fill="#2ad35a"/>
<path d="M1105.2 1179 V1169.5 M1101.5 1173 L1105.2 1169.2 L1108.9 1173" fill="none" stroke="#0b0b0b" stroke-width="2"/>
<circle cx="1193.9" cy="1173.9" r="9.3" fill="none" stroke="#bdbdbd" stroke-width="1.4"/><circle cx="1193.9" cy="1173.9" r="7.2" fill="#bdbdbd"/>
<circle cx="1274.1" cy="1174.4" r="9.2" fill="#bdbdbd"/>
<circle cx="1270.8" cy="1172.6" r="1.2" fill="#1b1b1b"/><circle cx="1277.4" cy="1172.6" r="1.2" fill="#1b1b1b"/>
<path d="M1270 1176.3 Q1274.1 1180 1278.2 1176.3" fill="none" stroke="#1b1b1b" stroke-width="1.3"/>
<path d="M1282.2 1162 V1169.6 M1278.4 1165.8 H1286" stroke="#bdbdbd" stroke-width="1.5" />
<circle cx="1282.2" cy="1166" r="5" fill="none" stroke="#1b1b1b" stroke-width="1.2" opacity="0"/>
<polyline points="1298.4,1176.1 1302.1,1172.5 1305.8,1176.1" fill="none" stroke="#d4d4d4" stroke-width="1.7"/>
<path d="M1354 1168 H1349 Q1346.3 1168 1346.3 1170.7 V1175 M1361.5 1176 V1180 Q1361.5 1182.5 1359 1182.5 H1354" fill="none" stroke="#bdbdbd" stroke-width="1.6"/>
<circle cx="1359" cy="1170" r="2.4" fill="none" stroke="#bdbdbd" stroke-width="1.5"/><circle cx="1348.5" cy="1180.5" r="2.4" fill="none" stroke="#bdbdbd" stroke-width="1.5"/>
<path d="M1440 1179.5 H1436 Q1434 1179.5 1434 1177.5 V1167.5 Q1434 1165.5 1436 1165.5 H1450 Q1452 1165.5 1452 1167.5 V1175" fill="none" stroke="#bdbdbd" stroke-width="1.6"/>
<rect x="1442" y="1177" width="10.5" height="3.8" rx="1.5" fill="#bdbdbd"/>
<rect x="2167" y="1170" width="61" height="26.7" rx="5.5" fill="#c62a2a"/></svg>
<div class="t" style="left:222.82px;top:7.15px;font-size:17.30px;line-height:17.30px;color:#1a1a1a;font-weight:700;font-family:'Liberation Sans', sans-serif;transform:scaleX(1.0491);-webkit-text-stroke:0.25px #1a1a1a;">Excel</div>
<div class="t" style="left:296.55px;top:7.15px;font-size:17.30px;line-height:17.30px;color:#1a1a1a;font-weight:400;font-family:'Liberation Sans', sans-serif;transform:scaleX(1.0477);-webkit-text-stroke:0.25px #1a1a1a;">File</div>
<div class="t" style="left:353.58px;top:7.15px;font-size:17.30px;line-height:17.30px;color:#1a1a1a;font-weight:400;font-family:'Liberation Sans', sans-serif;transform:scaleX(1.0255);-webkit-text-stroke:0.25px #1a1a1a;">Edit</div>
<div class="t" style="left:413.91px;top:7.15px;font-size:17.30px;line-height:17.30px;color:#1a1a1a;font-weight:400;font-family:'Liberation Sans', sans-serif;transform:scaleX(1.0242);-webkit-text-stroke:0.25px #1a1a1a;">View</div>
<div class="t" style="left:478.28px;top:7.15px;font-size:17.30px;line-height:17.30px;color:#1a1a1a;font-weight:400;font-family:'Liberation Sans', sans-serif;transform:scaleX(1.1058);-webkit-text-stroke:0.25px #1a1a1a;">Insert</div>
<div class="t" style="left:552.52px;top:7.15px;font-size:17.30px;line-height:17.30px;color:#1a1a1a;font-weight:400;font-family:'Liberation Sans', sans-serif;transform:scaleX(1.0700);-webkit-text-stroke:0.25px #1a1a1a;">Format</div>
<div class="t" style="left:639.63px;top:7.15px;font-size:17.30px;line-height:17.30px;color:#1a1a1a;font-weight:400;font-family:'Liberation Sans', sans-serif;transform:scaleX(1.0650);-webkit-text-stroke:0.25px #1a1a1a;">Tools</div>
<div class="t" style="left:709.54px;top:7.15px;font-size:17.30px;line-height:17.30px;color:#1a1a1a;font-weight:400;font-family:'Liberation Sans', sans-serif;transform:scaleX(1.0538);-webkit-text-stroke:0.25px #1a1a1a;">Data</div>
<div class="t" style="left:776.91px;top:7.15px;font-size:17.30px;line-height:17.30px;color:#1a1a1a;font-weight:400;font-family:'Liberation Sans', sans-serif;transform:scaleX(1.0246);-webkit-text-stroke:0.25px #1a1a1a;">Window</div>
<div class="t" style="left:867.47px;top:7.15px;font-size:17.30px;line-height:17.30px;color:#1a1a1a;font-weight:400;font-family:'Liberation Sans', sans-serif;transform:scaleX(1.1055);-webkit-text-stroke:0.25px #1a1a1a;">Help</div>
<div class="t" style="left:1883.35px;top:7.15px;font-size:17.30px;line-height:17.30px;color:#1a1a1a;font-weight:400;font-family:'Liberation Sans', sans-serif;transform:scaleX(1.0980);-webkit-text-stroke:0.25px #1a1a1a;">Sat 13 Aug&#8194;11:41 AM</div>
<div class="t" style="left:1075.60px;top:45.72px;font-size:18.75px;line-height:18.75px;color:#f4fff4;font-weight:700;font-family:'Liberation Sans', sans-serif;transform:scaleX(0.9812);">Mutual funds</div>
<div class="t" style="left:165.76px;top:87.00px;font-size:18.90px;line-height:18.90px;color:#1c1c1c;font-weight:700;font-family:'Liberation Sans', sans-serif;transform:scaleX(1.0071);">Home</div>
<div class="t" style="left:246.17px;top:87.00px;font-size:18.90px;line-height:18.90px;color:#1c1c1c;font-weight:400;font-family:'Liberation Sans', sans-serif;transform:scaleX(1.0783);-webkit-text-stroke:0.45px #1c1c1c;">Insert</div>
<div class="t" style="left:329.47px;top:87.00px;font-size:18.90px;line-height:18.90px;color:#1c1c1c;font-weight:400;font-family:'Liberation Sans', sans-serif;transform:scaleX(1.0092);-webkit-text-stroke:0.45px #1c1c1c;">Draw</div>
<div class="t" style="left:404.51px;top:87.00px;font-size:18.90px;line-height:18.90px;color:#1c1c1c;font-weight:400;font-family:'Liberation Sans', sans-serif;transform:scaleX(0.9857);-webkit-text-stroke:0.45px #1c1c1c;">Page Layout</div>
<div class="t" style="left:541.48px;top:87.00px;font-size:18.90px;line-height:18.90px;color:#1c1c1c;font-weight:400;font-family:'Liberation Sans', sans-serif;-webkit-text-stroke:0.45px #1c1c1c;">Formulas</div>
<div class="t" style="left:653.50px;top:87.00px;font-size:18.90px;line-height:18.90px;color:#1c1c1c;font-weight:400;font-family:'Liberation Sans', sans-serif;transform:scaleX(0.9907);-webkit-text-stroke:0.45px #1c1c1c;">Data</div>
<div class="t" style="left:723.52px;top:87.00px;font-size:18.90px;line-height:18.90px;color:#1c1c1c;font-weight:400;font-family:'Liberation Sans', sans-serif;transform:scaleX(0.9758);-webkit-text-stroke:0.45px #1c1c1c;">Review</div>
<div class="t" style="left:816.91px;top:87.00px;font-size:18.90px;line-height:18.90px;color:#1c1c1c;font-weight:400;font-family:'Liberation Sans', sans-serif;transform:scaleX(0.9869);-webkit-text-stroke:0.45px #1c1c1c;">View</div>
<div class="t" style="left:2020.51px;top:90.64px;font-size:16.72px;line-height:16.72px;color:#487457;font-weight:700;font-family:'Liberation Sans', sans-serif;transform:scaleX(0.9678);">Share</div>
<div class="t" style="left:178.62px;top:175.44px;font-size:14.83px;line-height:14.83px;color:#333;font-weight:400;font-family:'Liberation Sans', sans-serif;transform:scaleX(0.9917);-webkit-text-stroke:0.4px #333;">Paste</div>
<div class="t" style="left:314.44px;top:136.66px;font-size:15.99px;line-height:15.99px;color:#222;font-weight:400;font-family:'Liberation Sans', sans-serif;transform:scaleX(1.0742);">Calibri (Body)</div>
<div class="t" style="left:506.17px;top:136.66px;font-size:15.99px;line-height:15.99px;color:#222;font-weight:400;font-family:'Liberation Sans', sans-serif;transform:scaleX(1.0223);">12</div>
<div class="t" style="left:317.50px;top:178.18px;font-size:17.73px;line-height:17.73px;color:#2a2a2a;font-weight:700;font-family:'Liberation Sans', sans-serif;transform:scaleX(0.8711);">B</div>
<div class="t" style="left:920.63px;top:137.16px;font-size:15.99px;line-height:15.99px;color:#2a2a2a;font-weight:400;font-family:'Liberation Sans', sans-serif;transform:scaleX(0.9290);-webkit-text-stroke:0.4px #2a2a2a;">Wrap Text</div>
<div class="t" style="left:919.50px;top:180.30px;font-size:15.70px;line-height:15.70px;color:#2a2a2a;font-weight:400;font-family:'Liberation Sans', sans-serif;transform:scaleX(0.9592);-webkit-text-stroke:0.4px #2a2a2a;">Merge &amp; Centre</div>
<div class="t" style="left:1080.96px;top:136.56px;font-size:15.99px;line-height:15.99px;color:#222;font-weight:400;font-family:'Liberation Sans', sans-serif;transform:scaleX(1.0545);">General</div>
<div class="t" style="left:1130.04px;top:174.95px;font-size:26.74px;line-height:26.74px;color:#333;font-weight:400;font-family:'Liberation Sans', sans-serif;transform:scaleX(0.9165);">%</div>
<div class="t" style="left:1313.13px;top:175.49px;font-size:14.53px;line-height:14.53px;color:#2a2a2a;font-weight:400;font-family:'Liberation Sans', sans-serif;transform:scaleX(1.0549);-webkit-text-stroke:0.4px #2a2a2a;">Conditional</div>
<div class="t" style="left:1313.75px;top:191.59px;font-size:14.53px;line-height:14.53px;color:#2a2a2a;font-weight:400;font-family:'Liberation Sans', sans-serif;transform:scaleX(1.0765);-webkit-text-stroke:0.4px #2a2a2a;">Formatting</div>
<div class="t" style="left:1402.68px;top:175.49px;font-size:14.53px;line-height:14.53px;color:#2a2a2a;font-weight:400;font-family:'Liberation Sans', sans-serif;transform:scaleX(1.0499);-webkit-text-stroke:0.4px #2a2a2a;">Format</div>
<div class="t" style="left:1399.19px;top:191.59px;font-size:14.53px;line-height:14.53px;color:#2a2a2a;font-weight:400;font-family:'Liberation Sans', sans-serif;transform:scaleX(1.0477);-webkit-text-stroke:0.4px #2a2a2a;">as Table</div>
<div class="t" style="left:1480.92px;top:175.49px;font-size:14.53px;line-height:14.53px;color:#2a2a2a;font-weight:400;font-family:'Liberation Sans', sans-serif;transform:scaleX(1.0674);-webkit-text-stroke:0.4px #2a2a2a;">Cell</div>
<div class="t" style="left:1473.32px;top:191.59px;font-size:14.53px;line-height:14.53px;color:#2a2a2a;font-weight:400;font-family:'Liberation Sans', sans-serif;transform:scaleX(1.0457);-webkit-text-stroke:0.4px #2a2a2a;">Styles</div>
<div class="t" style="left:1567.23px;top:175.49px;font-size:14.53px;line-height:14.53px;color:#2a2a2a;font-weight:400;font-family:'Liberation Sans', sans-serif;transform:scaleX(1.0499);-webkit-text-stroke:0.4px #2a2a2a;">Insert</div>
<div class="t" style="left:1631.89px;top:175.49px;font-size:14.53px;line-height:14.53px;color:#2a2a2a;font-weight:400;font-family:'Liberation Sans', sans-serif;transform:scaleX(1.0432);-webkit-text-stroke:0.4px #2a2a2a;">Delete</div>
<div class="t" style="left:1697.50px;top:175.49px;font-size:14.53px;line-height:14.53px;color:#2a2a2a;font-weight:400;font-family:'Liberation Sans', sans-serif;transform:scaleX(1.0320);-webkit-text-stroke:0.4px #2a2a2a;">Format</div>
<div class="t" style="left:1816.60px;top:130.04px;font-size:14.24px;line-height:14.24px;color:#2a2a2a;font-weight:400;font-family:'Liberation Sans', sans-serif;transform:scaleX(1.0826);-webkit-text-stroke:0.4px #2a2a2a;">Auto-sum</div>
<div class="t" style="left:1815.97px;top:159.54px;font-size:14.24px;line-height:14.24px;color:#2a2a2a;font-weight:400;font-family:'Liberation Sans', sans-serif;transform:scaleX(1.0810);-webkit-text-stroke:0.4px #2a2a2a;">Fill</div>
<div class="t" style="left:1816.48px;top:189.04px;font-size:14.24px;line-height:14.24px;color:#2a2a2a;font-weight:400;font-family:'Liberation Sans', sans-serif;transform:scaleX(1.0176);-webkit-text-stroke:0.4px #2a2a2a;">Clear</div>
<div class="t" style="left:1916.52px;top:175.84px;font-size:14.24px;line-height:14.24px;color:#2a2a2a;font-weight:400;font-family:'Liberation Sans', sans-serif;transform:scaleX(1.0556);-webkit-text-stroke:0.4px #2a2a2a;">Sort &amp;</div>
<div class="t" style="left:1919.53px;top:192.04px;font-size:14.24px;line-height:14.24px;color:#2a2a2a;font-weight:400;font-family:'Liberation Sans', sans-serif;transform:scaleX(1.1107);-webkit-text-stroke:0.4px #2a2a2a;">Filter</div>
<div class="t" style="left:1981.59px;top:175.84px;font-size:14.24px;line-height:14.24px;color:#2a2a2a;font-weight:400;font-family:'Liberation Sans', sans-serif;transform:scaleX(1.0581);-webkit-text-stroke:0.4px #2a2a2a;">Find &amp;</div>
<div class="t" style="left:1982.11px;top:192.04px;font-size:14.24px;line-height:14.24px;color:#2a2a2a;font-weight:400;font-family:'Liberation Sans', sans-serif;transform:scaleX(1.0717);-webkit-text-stroke:0.4px #2a2a2a;">Select</div>
<div class="t" style="left:165.70px;top:226.19px;font-size:16.42px;line-height:16.42px;color:#222;font-weight:400;font-family:'Liberation Sans', sans-serif;transform:scaleX(0.9949);-webkit-text-stroke:0.4px #222;">A1</div>
<div class="t" style="left:363.94px;top:226.50px;font-size:18.90px;line-height:18.90px;color:#444;font-weight:400;font-family:'Liberation Serif', serif;font-style:italic;transform:scaleX(1.3939);">fx</div>
<div class="t" style="left:404.47px;top:227.64px;font-size:16.72px;line-height:16.72px;color:#222;font-weight:400;font-family:'Liberation Sans', sans-serif;">Hedge funds vs mutual funds</div>
<div class="t" style="left:569.40px;top:267.52px;font-size:20.64px;line-height:20.64px;color:#5a5a5a;font-weight:400;font-family:'Liberation Sans', sans-serif;transform:scaleX(0.9107);">A</div>
<div class="t" style="left:1323.91px;top:267.52px;font-size:20.64px;line-height:20.64px;color:#5a5a5a;font-weight:400;font-family:'Liberation Sans', sans-serif;transform:scaleX(1.2679);">B</div>
<div class="t" style="left:1803.56px;top:267.52px;font-size:20.64px;line-height:20.64px;color:#5a5a5a;font-weight:400;font-family:'Liberation Sans', sans-serif;transform:scaleX(0.9156);">C</div>
<div class="t" style="left:1966.33px;top:267.52px;font-size:20.64px;line-height:20.64px;color:#5a5a5a;font-weight:400;font-family:'Liberation Sans', sans-serif;transform:scaleX(1.0097);">D</div>
<div style="position:absolute;left:152px;top:299px;width:45px;height:763px;overflow:hidden"><div class="t" style="left:15.44px;top:6.96px;font-size:19.77px;line-height:19.77px;color:#3e6a52;font-weight:400;font-family:'Liberation Sans', sans-serif;transform:scaleX(1.1862);">1</div><div class="t" style="left:16.08px;top:37.96px;font-size:19.77px;line-height:19.77px;color:#585858;font-weight:400;font-family:'Liberation Sans', sans-serif;transform:scaleX(1.1341);">2</div><div class="t" style="left:16.46px;top:69.46px;font-size:19.77px;line-height:19.77px;color:#585858;font-weight:400;font-family:'Liberation Sans', sans-serif;transform:scaleX(1.0750);">3</div><div class="t" style="left:16.80px;top:100.96px;font-size:19.77px;line-height:19.77px;color:#585858;font-weight:400;font-family:'Liberation Sans', sans-serif;transform:scaleX(1.0118);">4</div><div class="t" style="left:16.34px;top:131.96px;font-size:19.77px;line-height:19.77px;color:#585858;font-weight:400;font-family:'Liberation Sans', sans-serif;transform:scaleX(1.0863);">5</div><div class="t" style="left:16.10px;top:162.96px;font-size:19.77px;line-height:19.77px;color:#585858;font-weight:400;font-family:'Liberation Sans', sans-serif;transform:scaleX(1.1097);">6</div><div class="t" style="left:16.08px;top:193.96px;font-size:19.77px;line-height:19.77px;color:#585858;font-weight:400;font-family:'Liberation Sans', sans-serif;transform:scaleX(1.1341);">7</div><div class="t" style="left:16.34px;top:224.96px;font-size:19.77px;line-height:19.77px;color:#585858;font-weight:400;font-family:'Liberation Sans', sans-serif;transform:scaleX(1.0863);">8</div><div class="t" style="left:16.21px;top:256.46px;font-size:19.77px;line-height:19.77px;color:#585858;font-weight:400;font-family:'Liberation Sans', sans-serif;transform:scaleX(1.1097);">9</div><div class="t" style="left:9.77px;top:287.96px;font-size:19.77px;line-height:19.77px;color:#585858;font-weight:400;font-family:'Liberation Sans', sans-serif;transform:scaleX(1.1028);">10</div><div class="t" style="left:9.61px;top:318.96px;font-size:19.77px;line-height:19.77px;color:#585858;font-weight:400;font-family:'Liberation Sans', sans-serif;transform:scaleX(1.2053);">11</div><div class="t" style="left:9.74px;top:349.96px;font-size:19.77px;line-height:19.77px;color:#585858;font-weight:400;font-family:'Liberation Sans', sans-serif;transform:scaleX(1.1196);">12</div><div class="t" style="left:9.76px;top:380.96px;font-size:19.77px;line-height:19.77px;color:#585858;font-weight:400;font-family:'Liberation Sans', sans-serif;transform:scaleX(1.1084);">13</div><div class="t" style="left:9.78px;top:411.96px;font-size:19.77px;line-height:19.77px;color:#585858;font-weight:400;font-family:'Liberation Sans', sans-serif;transform:scaleX(1.0919);">14</div><div class="t" style="left:9.76px;top:442.96px;font-size:19.77px;line-height:19.77px;color:#585858;font-weight:400;font-family:'Liberation Sans', sans-serif;transform:scaleX(1.1084);">15</div><div class="t" style="left:9.76px;top:473.96px;font-size:19.77px;line-height:19.77px;color:#585858;font-weight:400;font-family:'Liberation Sans', sans-serif;transform:scaleX(1.1084);">16</div><div class="t" style="left:9.74px;top:504.96px;font-size:19.77px;line-height:19.77px;color:#585858;font-weight:400;font-family:'Liberation Sans', sans-serif;transform:scaleX(1.1196);">17</div><div class="t" style="left:9.76px;top:535.46px;font-size:19.77px;line-height:19.77px;color:#585858;font-weight:400;font-family:'Liberation Sans', sans-serif;transform:scaleX(1.1084);">18</div><div class="t" style="left:9.75px;top:565.96px;font-size:19.77px;line-height:19.77px;color:#585858;font-weight:400;font-family:'Liberation Sans', sans-serif;transform:scaleX(1.1140);">19</div><div class="t" style="left:10.34px;top:596.96px;font-size:19.77px;line-height:19.77px;color:#585858;font-weight:400;font-family:'Liberation Sans', sans-serif;transform:scaleX(1.0759);">20</div><div class="t" style="left:10.33px;top:627.96px;font-size:19.77px;line-height:19.77px;color:#585858;font-weight:400;font-family:'Liberation Sans', sans-serif;transform:scaleX(1.0865);">21</div><div class="t" style="left:10.32px;top:658.96px;font-size:19.77px;line-height:19.77px;color:#585858;font-weight:400;font-family:'Liberation Sans', sans-serif;transform:scaleX(1.0919);">22</div><div class="t" style="left:10.33px;top:689.96px;font-size:19.77px;line-height:19.77px;color:#585858;font-weight:400;font-family:'Liberation Sans', sans-serif;transform:scaleX(1.0812);">23</div><div class="t" style="left:10.35px;top:720.96px;font-size:19.77px;line-height:19.77px;color:#585858;font-weight:400;font-family:'Liberation Sans', sans-serif;transform:scaleX(1.0655);">24</div><div class="t" style="left:10.33px;top:751.96px;font-size:19.77px;line-height:19.77px;color:#585858;font-weight:400;font-family:'Liberation Sans', sans-serif;transform:scaleX(1.0812);">25</div></div>
<div class="t" style="left:201.01px;top:304.52px;font-size:20.64px;line-height:20.64px;color:#111;font-weight:400;font-family:'Liberation Sans', sans-serif;transform:scaleX(1.0241);-webkit-text-stroke:0.3px #111;">Hedge funds vs mutual funds</div>
<div class="t" style="left:861.61px;top:336.16px;font-size:20.35px;line-height:20.35px;color:#111;font-weight:700;font-family:'Liberation Sans', sans-serif;transform:scaleX(0.9641);">SEBI regulates both</div>
<div class="t" style="left:201.21px;top:367.76px;font-size:20.35px;line-height:20.35px;color:#111;font-weight:700;font-family:'Liberation Sans', sans-serif;transform:scaleX(0.9787);">Hedge funds</div>
<div class="t" style="left:958.40px;top:367.86px;font-size:20.35px;line-height:20.35px;color:#111;font-weight:700;font-family:'Liberation Sans', sans-serif;transform:scaleX(0.9859);">Mutual Funds</div>
<div class="t" style="left:200.36px;top:398.52px;font-size:20.64px;line-height:20.64px;color:#111;font-weight:400;font-family:'Liberation Sans', sans-serif;-webkit-text-stroke:0.3px #111;">Less regulated</div>
<div class="t" style="left:957.28px;top:398.52px;font-size:20.64px;line-height:20.64px;color:#111;font-weight:400;font-family:'Liberation Sans', sans-serif;transform:scaleX(1.0395);-webkit-text-stroke:0.3px #111;">Highly regulated</div>
<div class="t" style="left:1715.20px;top:398.52px;font-size:20.64px;line-height:20.64px;color:#111;font-weight:400;font-family:'Liberation Sans', sans-serif;transform:scaleX(0.8603);-webkit-text-stroke:0.3px #111;">SEBI</div>
<div class="t" style="left:201.59px;top:429.52px;font-size:20.64px;line-height:20.64px;color:#111;font-weight:400;font-family:'Liberation Sans', sans-serif;transform:scaleX(0.9892);-webkit-text-stroke:0.3px #111;">They can take leverage</div>
<div class="t" style="left:958.59px;top:429.52px;font-size:20.64px;line-height:20.64px;color:#111;font-weight:400;font-family:'Liberation Sans', sans-serif;-webkit-text-stroke:0.3px #111;">They cannot take leverage</div>
<div class="t" style="left:200.96px;top:460.52px;font-size:20.64px;line-height:20.64px;color:#111;font-weight:400;font-family:'Liberation Sans', sans-serif;transform:scaleX(1.0072);-webkit-text-stroke:0.3px #111;">Can short sell stocks</div>
<div class="t" style="left:957.94px;top:460.52px;font-size:20.64px;line-height:20.64px;color:#111;font-weight:400;font-family:'Liberation Sans', sans-serif;transform:scaleX(1.0293);-webkit-text-stroke:0.3px #111;">Cannot short stocks</div>
<div class="t" style="left:200.97px;top:491.52px;font-size:20.64px;line-height:20.64px;color:#111;font-weight:400;font-family:'Liberation Sans', sans-serif;-webkit-text-stroke:0.3px #111;">Can move to cash</div>
<div class="t" style="left:957.95px;top:491.52px;font-size:20.64px;line-height:20.64px;color:#111;font-weight:400;font-family:'Liberation Sans', sans-serif;transform:scaleX(1.0219);-webkit-text-stroke:0.3px #111;">Cannot move to cash</div>
<div class="t" style="left:201.69px;top:522.52px;font-size:20.64px;line-height:20.64px;color:#111;font-weight:400;font-family:'Liberation Sans', sans-serif;transform:scaleX(0.9893);-webkit-text-stroke:0.3px #111;">Just for HNIs</div>
<div class="t" style="left:959.00px;top:522.52px;font-size:20.64px;line-height:20.64px;color:#111;font-weight:400;font-family:'Liberation Sans', sans-serif;transform:scaleX(1.0312);-webkit-text-stroke:0.3px #111;">Anyone can invest in a mutual fund</div>
<div class="t" style="left:201.89px;top:554.52px;font-size:20.64px;line-height:20.64px;color:#111;font-weight:400;font-family:'Liberation Sans', sans-serif;transform:scaleX(1.0294);-webkit-text-stroke:0.3px #111;">Very risky</div>
<div class="t" style="left:957.39px;top:554.52px;font-size:20.64px;line-height:20.64px;color:#111;font-weight:400;font-family:'Liberation Sans', sans-serif;transform:scaleX(0.9768);-webkit-text-stroke:0.3px #111;">Less risky</div>
<div class="t" style="left:200.37px;top:647.52px;font-size:20.64px;line-height:20.64px;color:#111;font-weight:400;font-family:'Liberation Sans', sans-serif;transform:scaleX(0.9894);-webkit-text-stroke:0.3px #111;">NIFTY - 10 lakh long</div>
<div class="t" style="left:200.34px;top:678.52px;font-size:20.64px;line-height:20.64px;color:#111;font-weight:400;font-family:'Liberation Sans', sans-serif;transform:scaleX(1.0081);-webkit-text-stroke:0.3px #111;">Put options of NIFTY</div>
<div class="t" style="left:957.72px;top:832.76px;font-size:20.35px;line-height:20.35px;color:#111;font-weight:700;font-family:'Liberation Sans', sans-serif;transform:scaleX(0.9642);">Ponzi scheme</div>
<div class="t" style="left:254.92px;top:1070.09px;font-size:18.31px;line-height:18.31px;color:#6f6f6f;font-weight:400;font-family:'Liberation Sans', sans-serif;transform:scaleX(0.9403);-webkit-text-stroke:0.4px #6f6f6f;">Final tips</div>
<div class="t" style="left:370.42px;top:1070.09px;font-size:18.31px;line-height:18.31px;color:#6f6f6f;font-weight:400;font-family:'Liberation Sans', sans-serif;transform:scaleX(0.9411);-webkit-text-stroke:0.4px #6f6f6f;">Factors</div>
<div class="t" style="left:475.67px;top:1070.09px;font-size:18.31px;line-height:18.31px;color:#6f6f6f;font-weight:400;font-family:'Liberation Sans', sans-serif;transform:scaleX(0.9134);-webkit-text-stroke:0.4px #6f6f6f;">Types of MF</div>
<div class="t" style="left:617.80px;top:1070.09px;font-size:18.31px;line-height:18.31px;color:#6f6f6f;font-weight:400;font-family:'Liberation Sans', sans-serif;transform:scaleX(0.9551);-webkit-text-stroke:0.4px #6f6f6f;">Basics</div>
<div class="t" style="left:720.61px;top:1070.09px;font-size:18.31px;line-height:18.31px;color:#4d8a61;font-weight:400;font-family:'Liberation Sans', sans-serif;transform:scaleX(0.9486);-webkit-text-stroke:0.4px #4d8a61;">Hedge funds</div>
<div class="t" style="left:865.95px;top:1070.09px;font-size:18.31px;line-height:18.31px;color:#6f6f6f;font-weight:400;font-family:'Liberation Sans', sans-serif;transform:scaleX(0.9236);-webkit-text-stroke:0.4px #6f6f6f;">Debt MF taxes</div>
<div class="t" style="left:1028.26px;top:1070.09px;font-size:18.31px;line-height:18.31px;color:#6f6f6f;font-weight:400;font-family:'Liberation Sans', sans-serif;transform:scaleX(0.9385);-webkit-text-stroke:0.4px #6f6f6f;">Timing</div>
<div class="t" style="left:1130.04px;top:1070.09px;font-size:18.31px;line-height:18.31px;color:#6f6f6f;font-weight:400;font-family:'Liberation Sans', sans-serif;transform:scaleX(0.9287);-webkit-text-stroke:0.4px #6f6f6f;">Market crashes</div>
<div class="t" style="left:183.48px;top:1104.99px;font-size:16.42px;line-height:16.42px;color:#666;font-weight:400;font-family:'Liberation Sans', sans-serif;">Ready</div>
<div class="t" style="left:2010.38px;top:1104.05px;font-size:17.30px;line-height:17.30px;color:#6a6a6a;font-weight:400;font-family:'Liberation Sans', sans-serif;transform:scaleX(1.0171);">144%</div>
<div class="t" style="left:23.66px;top:1191.01px;font-size:12.50px;line-height:12.50px;color:#d4d4d4;font-weight:400;font-family:'Liberation Sans', sans-serif;-webkit-text-stroke:0.15px #d4d4d4;">Unmute</div>
<div class="t" style="left:108.86px;top:1191.01px;font-size:12.50px;line-height:12.50px;color:#d4d4d4;font-weight:400;font-family:'Liberation Sans', sans-serif;transform:scaleX(0.9676);-webkit-text-stroke:0.15px #d4d4d4;">Start Video</div>
<div class="t" style="left:917.10px;top:1165.34px;font-size:12.35px;line-height:12.35px;color:#d4d4d4;font-weight:400;font-family:'Liberation Sans', sans-serif;transform:scaleX(1.0216);-webkit-text-stroke:0.15px #d4d4d4;">53</div>
<div class="t" style="left:869.44px;top:1190.91px;font-size:12.50px;line-height:12.50px;color:#d4d4d4;font-weight:400;font-family:'Liberation Sans', sans-serif;transform:scaleX(0.9628);-webkit-text-stroke:0.15px #d4d4d4;">Participants</div>
<div class="t" style="left:998.62px;top:1190.91px;font-size:12.50px;line-height:12.50px;color:#d4d4d4;font-weight:400;font-family:'Liberation Sans', sans-serif;transform:scaleX(0.9343);-webkit-text-stroke:0.15px #d4d4d4;">Chat</div>
<div class="t" style="left:1069.29px;top:1190.91px;font-size:12.50px;line-height:12.50px;color:#3fc870;font-weight:400;font-family:'Liberation Sans', sans-serif;transform:scaleX(0.9145);-webkit-text-stroke:0.15px #3fc870;">Share Screen</div>
<div class="t" style="left:1174.57px;top:1190.91px;font-size:12.50px;line-height:12.50px;color:#d4d4d4;font-weight:400;font-family:'Liberation Sans', sans-serif;transform:scaleX(0.9335);-webkit-text-stroke:0.15px #d4d4d4;">Record</div>
<div class="t" style="left:1247.48px;top:1190.91px;font-size:12.50px;line-height:12.50px;color:#d4d4d4;font-weight:400;font-family:'Liberation Sans', sans-serif;transform:scaleX(0.9238);-webkit-text-stroke:0.15px #d4d4d4;">Reactions</div>
<div class="t" style="left:1340.40px;top:1190.91px;font-size:12.50px;line-height:12.50px;color:#d4d4d4;font-weight:400;font-family:'Liberation Sans', sans-serif;transform:scaleX(0.9443);-webkit-text-stroke:0.15px #d4d4d4;">Apps</div>
<div class="t" style="left:1408.84px;top:1190.91px;font-size:12.50px;line-height:12.50px;color:#d4d4d4;font-weight:400;font-family:'Liberation Sans', sans-serif;transform:scaleX(0.9715);-webkit-text-stroke:0.15px #d4d4d4;">Whiteboards</div>
<div class="t" style="left:2179.84px;top:1175.82px;font-size:13.08px;line-height:13.08px;color:#ffffff;font-weight:700;font-family:'Liberation Sans', sans-serif;transform:scaleX(0.8984);">Leave</div></body></html>
